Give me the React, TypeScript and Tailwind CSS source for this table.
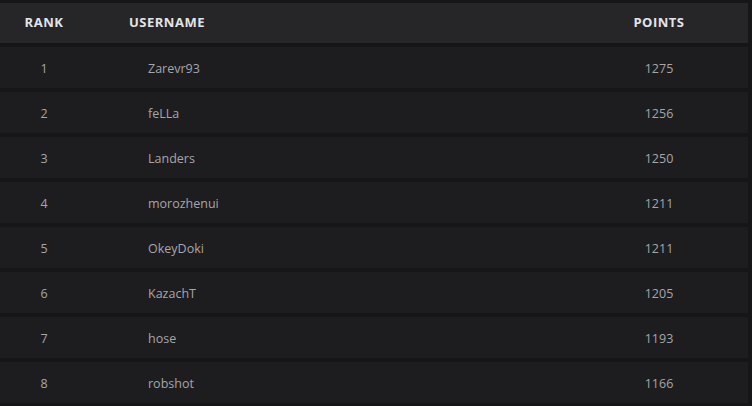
import React from 'react';

type Row = { rank: number; username: string; points: number };

const rows: Row[] = [
    { rank: 1, username: 'Zarevr93', points: 1275 },
    { rank: 2, username: 'feLLa', points: 1256 },
    { rank: 3, username: 'Landers', points: 1250 },
    { rank: 4, username: 'morozhenui', points: 1211 },
    { rank: 5, username: 'OkeyDoki', points: 1211 },
    { rank: 6, username: 'KazachT', points: 1205 },
    { rank: 7, username: 'hose', points: 1193 },
    { rank: 8, username: 'robshot', points: 1166 },
];

const App: React.FC = () => {
    return (
        <div
            className="w-[752px] h-[406px] bg-[#161618] pt-[3px] pr-[4px] overflow-hidden"
            style={{ fontFamily: '"Open Sans", "Noto Sans", sans-serif' }}
        >
            {/* Header */}
            <div className="flex items-center h-[40px] bg-[#262628] text-[13px] font-bold tracking-[0.5px] text-[#e4e4e6]">
                <div className="w-[88px] text-center">RANK</div>
                <div className="flex-1 pl-[41px]">USERNAME</div>
                <div className="w-[100px] mr-[39px] text-center">POINTS</div>
            </div>

            {/* Rows */}
            <div className="flex flex-col gap-[4px] mt-[4px]">
                {rows.map(row => (
                    <div
                        key={row.rank}
                        className="flex items-center h-[41px] pt-[3px] bg-[#1d1d20] text-[12.5px] text-[#a6a6a8]"
                    >
                        <div className="w-[88px] text-center">{row.rank}</div>
                        <div className="flex-1 pl-[60px]">{row.username}</div>
                        <div className="w-[100px] mr-[39px] text-center">{row.points}</div>
                    </div>
                ))}
            </div>
        </div>
    );
};

export default App;
